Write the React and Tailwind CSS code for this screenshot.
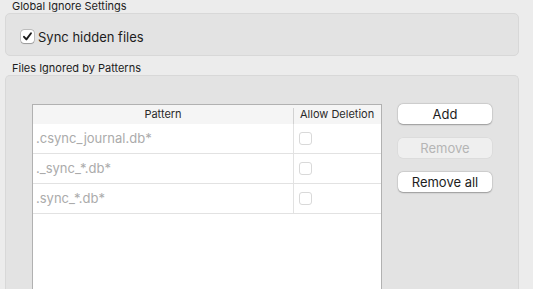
const patterns = ['.csync_journal.db*', '._sync_*.db*', '.sync_*.db*'];

function CheckMark() {
  return (
    <svg width="11" height="11" viewBox="0 0 11 11" className="block">
      <path d="M2 5.8 L4.4 8.4 L9 2.2" fill="none" stroke="#1a1a1a" strokeWidth="1.9" strokeLinecap="round" strokeLinejoin="round" />
    </svg>
  );
}

function Button({ children, disabled }) {
  return (
    <div
      className={`flex h-[20px] w-[94px] items-center justify-center rounded-[5px] text-[13px] leading-[20px] ${
        disabled
          ? 'bg-[#efefef] text-[#b5b5b5] shadow-[0_0_0_0.5px_rgba(0,0,0,0.06)]'
          : 'bg-white text-[#1d1d1d] shadow-[0_0.5px_1.5px_rgba(0,0,0,0.3),0_0_0_0.5px_rgba(0,0,0,0.08)]'
      }`}
    >
      {children}
    </div>
  );
}

export default function App() {
  return (
    <div className="h-[289px] w-[533px] overflow-hidden bg-[#ececec] pl-[5px] font-['Inter','Liberation_Sans',sans-serif] text-[#1d1d1d]">
      <div className="h-[13px] pl-[7px] text-[11px] leading-[13px]">Global Ignore Settings</div>
      <div className="h-[43px] w-[514px] rounded-[5px] border border-[#d8d8d8] bg-[#e3e3e3] pl-[15px] pt-[15px]">
        <div className="flex items-center gap-[4px]">
          <div className="flex h-[13px] w-[13px] items-center justify-center rounded-[3px] bg-white shadow-[0_0_0_0.5px_rgba(0,0,0,0.3),0_0.5px_1px_rgba(0,0,0,0.2)]">
            <CheckMark />
          </div>
          <span className="mt-[2px] text-[13px] leading-[13px]">Sync hidden files</span>
        </div>
      </div>

      <div className="mt-[6px] h-[13px] pl-[7px] text-[11px] leading-[13px]">Files Ignored by Patterns</div>
      <div className="flex h-[220px] w-[514px] gap-[16px] rounded-t-[5px] border border-b-0 border-[#d8d8d8] bg-[#e3e3e3] pl-[26px] pt-[28px]">
        <div className="flex h-full w-[350px] flex-col border border-b-0 border-[#b1b1b1] bg-white">
          <div className="flex h-[19px] bg-[#f5f5f5] text-[11px] leading-[19px] text-[#2a2a2a]">
            <div className="w-[260px] text-center">Pattern</div>
            <div className="mt-[3px] w-px bg-[#d2d2d2]" />
            <div className="pl-[6px]">Allow Deletion</div>
          </div>
          {patterns.map((p) => (
            <div key={p} className="flex h-[30px] border-b border-[#e2e2e2] text-[13px] text-[#ababab]">
              <div className="w-[260px] pl-[3px] leading-[29px]">{p}</div>
              <div className="w-px bg-[#e2e2e2]" />
              <div className="flex items-center pl-[5px]">
                <div className="h-[13px] w-[13px] rounded-[3px] border border-[#d9d9d9] bg-white" />
              </div>
            </div>
          ))}
        </div>
        <div className="flex flex-col gap-[14px]">
          <Button>Add</Button>
          <Button disabled>Remove</Button>
          <Button>Remove all</Button>
        </div>
      </div>
    </div>
  );
}
